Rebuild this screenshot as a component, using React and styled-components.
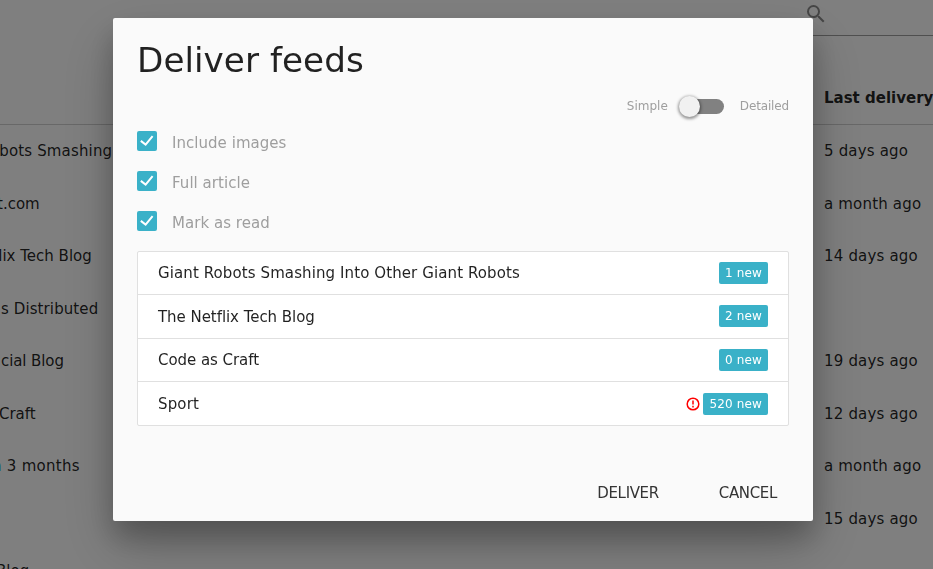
import React from 'react';
import styled, { createGlobalStyle } from 'styled-components';
import { MdSearch } from 'react-icons/md';

const GlobalStyle = createGlobalStyle`
  *, *::before, *::after { box-sizing: border-box; }
  html, body { margin: 0; height: 100%; overflow: hidden; }
  body {
    background: #fff;
    color: rgba(0, 0, 0, 0.87);
    font: 15px/22.5px "DejaVu Sans", Verdana, sans-serif;
  }
`;

const Page = styled.main`
  width: 933px;
  height: 569px;
  overflow: hidden;
`;

const SearchBar = styled.div`
  width: 333px;
  height: 36px;
  margin-left: auto;
  padding: 2px 0 0 204px;
  border-bottom: 1px solid #9e9e9e;
  color: rgba(0, 0, 0, 0.45);
`;

const SearchIcon = styled(MdSearch)`
  display: block;
  width: 24px;
  height: 24px;
`;

const TableRow = styled.div`
  display: grid;
  grid-template-columns: 824px 1fr;
  align-items: center;
  height: 52.5px;
  white-space: nowrap;
`;

const HeaderRow = styled(TableRow)`
  height: 53px;
  margin-top: 36px;
  border-bottom: 1px solid #d0d0d0;
  font-weight: 700;
`;

const FeedCell = styled.span`
  margin-left: ${({ $shift }) => $shift}px;
  letter-spacing: ${({ $tracking }) => $tracking || 0}px;
`;

const DateCell = styled.span`
  letter-spacing: 0.18px;
`;

const LinkTail = styled.span`
  color: #039be5;
`;

const Overlay = styled.div`
  position: fixed;
  inset: 0;
  display: flex;
  align-items: flex-start;
  padding: 18px 0 0 113px;
  background: rgba(0, 0, 0, 0.5);
`;

const Modal = styled.section`
  display: flex;
  flex-direction: column;
  width: 700px;
  height: 503px;
  padding: 24px 24px 0;
  border-radius: 2px;
  background: #fafafa;
  box-shadow: 0 16px 28px 0 rgba(0, 0, 0, 0.22), 0 25px 55px 0 rgba(0, 0, 0, 0.21);
`;

const Title = styled.h4`
  margin: 0;
  font-size: 34.2px;
  font-weight: 400;
  line-height: 37.6px;
  letter-spacing: 0.05px;
`;

const ModeSwitch = styled.div`
  display: flex;
  align-items: center;
  justify-content: flex-end;
  height: 22px;
  margin-top: 15px;
  color: #9e9e9e;
  font-size: 12px;
`;

const ModeLabel = styled.span`
  padding-top: 2px;
  letter-spacing: ${({ $tracking }) => $tracking || 0}px;
`;

const Track = styled.span`
  width: 40px;
  height: 15px;
  margin: 1px 16px 0 16px;
  border-radius: 15px;
  background: #818181;
`;

const Thumb = styled.span`
  display: block;
  width: 21px;
  height: 21px;
  margin: -3px 0 0 -5px;
  border-radius: 50%;
  background: #f1f1f1;
  box-shadow: 0 1px 3px 1px rgba(0, 0, 0, 0.4);
`;

const Options = styled.div`
  display: flex;
  flex-direction: column;
  gap: 15px;
  margin-top: 14px;
`;

const Option = styled.label`
  display: flex;
  gap: 15px;
  height: 25px;
  line-height: 25px;
  color: #9e9e9e;
  letter-spacing: 0.04px;
`;

const CheckBox = styled.svg`
  width: 20px;
  height: 20px;
  border-radius: 2px;
  background: #3ab1c8;
`;

const Collection = styled.ul`
  margin: 15px 0 0;
  padding: 0;
  border: 1px solid #e0e0e0;
  border-radius: 2px;
  background: #fff;
  list-style: none;
`;

const CollectionItem = styled.li`
  display: flex;
  align-items: center;
  height: 43.5px;
  padding: 0 20px;
  border-bottom: 1px solid #e0e0e0;

  &:last-child {
    height: 43px;
    border-bottom: 0;
  }
`;

const FeedName = styled.span`
  flex: 1;
  letter-spacing: ${({ $tracking }) => $tracking}px;

  ${CollectionItem}:nth-child(even) & { padding-top: 1px; }
`;

const Badge = styled.span`
  height: 22px;
  padding: 0 6px;
  border-radius: 2px;
  background: #3ab1c8;
  color: #fff;
  font-size: 12px;
  letter-spacing: 0.15px;
  line-height: 23.5px;
`;

const Warning = styled.svg`
  width: 14px;
  height: 14px;
  margin-right: 3px;
`;

const Actions = styled.footer`
  display: flex;
  justify-content: flex-end;
  gap: 60px;
  margin-top: 49px;
  padding-right: 12px;
`;

const FlatButton = styled.button`
  height: 36px;
  padding: 0;
  border: 0;
  background: transparent;
  color: #343434;
  font: inherit;
  line-height: 36px;
  letter-spacing: -0.35px;
  text-transform: uppercase;
`;

const deliveries = [
  { name: 'Giant Robots Smashing', shift: -66, tracking: 0.15, last: '5 days ago' },
  { name: 't.com', shift: -3, last: 'a month ago' },
  { name: 'The Netflix Tech Blog', shift: -66, last: '14 days ago' },
  { name: 's Distributed', shift: 1, tracking: 0.1, last: '' },
  { name: 'cial Blog', shift: 1, tracking: -0.1, last: '19 days ago' },
  { name: 'Code as Craft', shift: -66, last: '12 days ago' },
  { link: 'n', name: ' 3 months', shift: -8, tracking: 0.28, last: 'a month ago' },
  { name: '', shift: 0, last: '15 days ago' },
  { name: 'Blog', shift: -4, last: '' },
];

const options = ['Include images', 'Full article', 'Mark as read'];

const feeds = [
  { name: 'Giant Robots Smashing Into Other Giant Robots', tracking: 0.1, count: 1 },
  { name: 'The Netflix Tech Blog', tracking: -0.05, count: 2 },
  { name: 'Code as Craft', tracking: -0.05, count: 0 },
  { name: 'Sport', tracking: 0.15, count: 520, warn: true },
];

export default function App() {
  return (
    <>
      <GlobalStyle />
      <Page>
        <SearchBar><SearchIcon /></SearchBar>
        <HeaderRow><span /><span>Last delivery</span></HeaderRow>
        {deliveries.map((row, i) => (
          <TableRow key={i}>
            <FeedCell $shift={row.shift} $tracking={row.tracking}>
              {row.link && <LinkTail>{row.link}</LinkTail>}{row.name}
            </FeedCell>
            <DateCell>{row.last}</DateCell>
          </TableRow>
        ))}
      </Page>
      <Overlay>
        <Modal>
          <Title>Deliver feeds</Title>
          <ModeSwitch>
            <ModeLabel>Simple</ModeLabel>
            <Track><Thumb /></Track>
            <ModeLabel $tracking={-0.15}>Detailed</ModeLabel>
          </ModeSwitch>
          <Options>
            {options.map((label) => (
              <Option key={label}>
                <CheckBox viewBox="0 0 20 20">
                  <path d="M3.8 9.9 8.6 13.6 15.6 5.1" fill="none" stroke="#fff" strokeWidth="2" />
                </CheckBox>
                {label}
              </Option>
            ))}
          </Options>
          <Collection>
            {feeds.map((feed) => (
              <CollectionItem key={feed.name}>
                <FeedName $tracking={feed.tracking}>{feed.name}</FeedName>
                {feed.warn && (
                  <Warning viewBox="0 0 14 14" fill="none" stroke="#ff0000" strokeWidth="1.5">
                    <circle cx="7" cy="7" r="5.8" />
                    <path d="M7 3.6v4M7 8.8v1.6" />
                  </Warning>
                )}
                <Badge>{feed.count} new</Badge>
              </CollectionItem>
            ))}
          </Collection>
          <Actions>
            <FlatButton>Deliver</FlatButton>
            <FlatButton>Cancel</FlatButton>
          </Actions>
        </Modal>
      </Overlay>
    </>
  );
}
